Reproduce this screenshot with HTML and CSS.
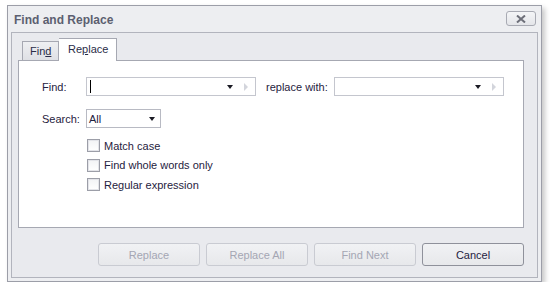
FILE: index.html
```html
<!DOCTYPE html>
<html lang="en">
<head>
    <meta charset="UTF-8">
    <title>Find and Replace</title>
    <link rel="stylesheet" href="styles.css">
</head>
<body>
    <div class="window">
        <div class="titlebar">
            <span class="title">Find and Replace</span>
            <div class="close-btn">
                <svg width="10" height="8" viewBox="0 0 10 8"><path d="M1 0.5 L9 7.5 M9 0.5 L1 7.5" stroke="#6d6f79" stroke-width="2"/></svg>
            </div>
        </div>
        <div class="client">
            <div class="tabs">
                <div class="tab">Fin<u>d</u></div>
                <div class="tab active">Re<u>p</u>lace</div>
            </div>
            <div class="tab-page">
                <div class="row">
                    <span class="label">Find:</span>
                    <div class="mru">
                        <span class="caret"></span>
                        <span class="arrow-down"></span>
                        <span class="arrow-right"></span>
                    </div>
                    <span class="label with">replace with:</span>
                    <div class="mru">
                        <span class="arrow-down"></span>
                        <span class="arrow-right"></span>
                    </div>
                </div>
                <div class="row search-row">
                    <span class="label">Search:</span>
                    <div class="combo">
                        <span>All</span>
                        <span class="arrow-down"></span>
                    </div>
                </div>
                <ul class="options">
                    <li><span class="check"></span>Match case</li>
                    <li><span class="check"></span>Find whole words only</li>
                    <li><span class="check"></span>Regular expression</li>
                </ul>
            </div>
            <div class="buttons">
                <button disabled>Replace</button>
                <button disabled>Replace All</button>
                <button disabled>Find Next</button>
                <button class="default">Cancel</button>
            </div>
        </div>
    </div>
</body>
</html>
```

FILE: styles.css
```css
body {
    margin: 0;
    background-color: #fff;
    font-family: "Liberation Sans", Arial, sans-serif;
    font-size: 11px;
    color: #1f2240;
}
.window {
    box-sizing: border-box;
    width: 535px;
    height: 277px;
    margin: 5px 0 0 7px;
    border: 1px solid #9c9ea8;
    background-color: #edeef1;
    box-shadow: 3px 3px 5px rgba(0, 0, 0, 0.22);
    display: flex;
    flex-direction: column;
}
.titlebar {
    height: 26px;
    display: flex;
    align-items: center;
    justify-content: space-between;
    padding: 0 5px 0 6px;
}
.title {
    font-size: 12px;
    font-weight: bold;
    color: #5c5f70;
    margin-top: 1px;
}
.close-btn {
    box-sizing: border-box;
    width: 30px;
    height: 15px;
    border: 1px solid #a8aab3;
    border-radius: 3px;
    background: linear-gradient(#f4f5f7, #e4e5e9);
    display: flex;
    align-items: center;
    justify-content: center;
    margin-top: -1px;
}
.close-btn svg {
    display: block;
}
.client {
    flex: 1;
    margin: 0 3px 3px 3px;
    border: 1px solid #b2b4bd;
    background-color: #e9eaee;
    padding: 5px 13px 0 6px;
}
.tabs {
    display: flex;
    align-items: flex-end;
    padding-left: 4px;
    height: 22px;
}
.tab {
    box-sizing: border-box;
    height: 19px;
    padding: 0 7px;
    border: 1px solid #a6a8b2;
    border-bottom: none;
    background: linear-gradient(#eeeff2, #dfe0e5);
    line-height: 19px;
    font-size: 11px;
    color: #2a2d48;
}
.tab.active {
    height: 23px;
    margin-bottom: -1px;
    padding: 0 0 0 9px;
    background: #fff;
    border-left: none;
    position: relative;
    z-index: 1;
    line-height: 20px;
    width: 58px;
}
.tab:first-child {
    width: 37px;
    padding: 0 0 0 7px;
}
.tab-page {
    box-sizing: border-box;
    height: 168px;
    border: 1px solid #a6a8b2;
    background-color: #fff;
    padding: 16px 0 0 23px;
}
.row {
    display: flex;
    align-items: center;
    height: 19px;
}
.label {
    width: 44px;
}
.label.with {
    width: auto;
    margin: 0 6px 0 10px;
}
.mru {
    box-sizing: border-box;
    width: 170px;
    height: 19px;
    border: 1px solid #c4c6ce;
    display: flex;
    align-items: center;
    padding: 0 7px 0 3px;
}
.caret {
    width: 1px;
    height: 13px;
    background-color: #000;
}
.arrow-down {
    margin-left: auto;
    width: 0;
    height: 0;
    border-left: 3.5px solid transparent;
    border-right: 3.5px solid transparent;
    border-top: 4px solid #1b1b24;
}
.arrow-right {
    margin-left: 11px;
    width: 0;
    height: 0;
    border-top: 4px solid transparent;
    border-bottom: 4px solid transparent;
    border-left: 4px solid #d3d5dc;
}
.search-row {
    margin-top: 13px;
}
.combo {
    box-sizing: border-box;
    width: 75px;
    height: 19px;
    border: 1px solid #b8bac3;
    display: flex;
    align-items: center;
    padding: 0 5px 0 2px;
}
.options {
    list-style-type: none;
    margin: 11px 0 0 45px;
    padding: 0;
}
.options li {
    display: flex;
    align-items: center;
    height: 13px;
    margin-bottom: 6.5px;
}
.check {
    box-sizing: border-box;
    width: 13px;
    height: 13px;
    border: 1px solid #9c9ea8;
    background: linear-gradient(#f2f3f5, #ffffff);
    box-shadow: inset 0 0 0 1px #e3e4e9;
    margin: 0 4px 0 0;
}
.buttons {
    display: flex;
    justify-content: flex-end;
    gap: 6px;
    margin-top: 15px;
}
button {
    width: 102px;
    height: 23px;
    border: 1px solid #c9cbd2;
    border-radius: 3px;
    background: linear-gradient(#f1f2f4, #e7e8eb);
    font-family: "Liberation Sans", Arial, sans-serif;
    font-size: 11px;
    color: #1f2240;
    padding: 0;
}
button:disabled {
    color: #a4a6b3;
}
button.default {
    border-color: #8f919b;
    color: #1f2240;
}
```
